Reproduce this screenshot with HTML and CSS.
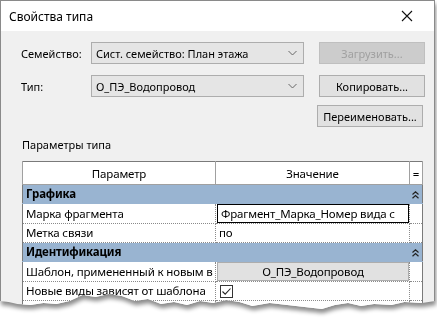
FILE: index.html
```html
<!DOCTYPE html>
<html lang="ru">

<head>
    <meta charset="UTF-8">
    <title>Свойства типа</title>
    <link rel="stylesheet" href="styles.css">
</head>

<body>
    <div class="shadow">
        <div class="window">
            <div class="titlebar">
                <span class="title">Свойства типа</span>
                <svg class="close" width="12" height="12" viewBox="0 0 12 12">
                    <path d="M1 1L11 11M11 1L1 11" stroke="#111" stroke-width="1.1" fill="none" />
                </svg>
            </div>

            <div class="content">
                <div class="row">
                    <label class="label">Семейство:</label>
                    <div class="select">
                        <span>Сист. семейство: План этажа</span>
                        <svg width="9" height="6" viewBox="0 0 9 6"><path d="M0.5 1L4.5 5L8.5 1" stroke="#666" fill="none" /></svg>
                    </div>
                    <button class="btn disabled">Загрузить...</button>
                </div>
                <div class="row">
                    <label class="label">Тип:</label>
                    <div class="select">
                        <span>О_ПЭ_Водопровод</span>
                        <svg width="9" height="6" viewBox="0 0 9 6"><path d="M0.5 1L4.5 5L8.5 1" stroke="#666" fill="none" /></svg>
                    </div>
                    <button class="btn">Копировать...</button>
                </div>
                <div class="row row-right">
                    <button class="btn">Переименовать...</button>
                </div>

                <div class="section-title">Параметры типа</div>

                <table class="params">
                    <thead>
                        <tr>
                            <th class="col-name">Параметр</th>
                            <th class="col-value">Значение</th>
                            <th class="col-eq">=</th>
                        </tr>
                    </thead>
                    <tbody>
                        <tr class="group">
                            <td colspan="2">Графика</td>
                            <td class="col-eq"><svg width="7" height="8" viewBox="0 0 7 8"><path d="M0.5 3.5L3.5 0.8L6.5 3.5M0.5 7.3L3.5 4.6L6.5 7.3" stroke="#222" stroke-width="1.2" fill="none" /></svg></td>
                        </tr>
                        <tr>
                            <td>Марка фрагмента</td>
                            <td class="editing"><div class="input">Фрагмент_Марка_Номер вида с</div></td>
                            <td></td>
                        </tr>
                        <tr>
                            <td>Метка связи</td>
                            <td>по</td>
                            <td></td>
                        </tr>
                        <tr class="group">
                            <td colspan="2">Идентификация</td>
                            <td class="col-eq"><svg width="7" height="8" viewBox="0 0 7 8"><path d="M0.5 3.5L3.5 0.8L6.5 3.5M0.5 7.3L3.5 4.6L6.5 7.3" stroke="#222" stroke-width="1.2" fill="none" /></svg></td>
                        </tr>
                        <tr>
                            <td>Шаблон, примененный к новым в</td>
                            <td class="editing"><div class="cell-btn">О_ПЭ_Водопровод</div></td>
                            <td></td>
                        </tr>
                        <tr>
                            <td>Новые виды зависят от шаблона</td>
                            <td>
                                <span class="check">
                                    <svg width="11" height="11" viewBox="0 0 11 11"><path d="M1.5 5.5L4.2 8.2L9.5 2.5" stroke="#222" stroke-width="1.1" fill="none" /></svg>
                                </span>
                            </td>
                            <td></td>
                        </tr>
                        <tr>
                            <td>&nbsp;</td>
                            <td></td>
                            <td></td>
                        </tr>
                    </tbody>
                </table>
            </div>
        </div>
    </div>
</body>

</html>
```

FILE: styles.css
```css
body {
    margin: 0;
    padding: 0;
    background-color: #ffffff;
    font-family: "Noto Sans", "Open Sans", sans-serif;
    color: #000000;
}

/* Рваный край снизу */
.shadow {
    filter: drop-shadow(1px 4px 2px rgba(0, 0, 0, 0.45));
    width: 435px;
}

.window {
    width: 433px;
    height: 318px;
    border: 1px solid #8a8a8a;
    border-bottom: none;
    background-color: #f0f0f0;
    overflow: hidden;
    clip-path: polygon(0 0, 100% 0, 100% 301px,
        97% 303px, 93% 302px, 90% 305px, 86% 304px, 83% 306px, 80% 303px,
        77% 305px, 74% 309px, 70% 307px, 66% 305px, 62% 303px, 58% 306px,
        55% 302px, 52% 300px, 49% 303px, 46% 301px, 43% 305px, 40% 302px,
        37% 304px, 34% 299px, 31% 301px, 28% 296px, 25% 294px, 22% 297px,
        19% 295px, 16% 301px, 13% 304px, 10% 303px, 7% 305px, 4% 304px,
        2% 302px, 0 301px);
}

.titlebar {
    height: 30px;
    background-color: #ffffff;
    display: flex;
    align-items: center;
    justify-content: space-between;
    padding: 0 21px 0 8px;
}

.title {
    font-size: 12px;
}

.content {
    padding: 11px 0 0 20px;
    font-size: 11px;
}

.row {
    display: flex;
    align-items: center;
    height: 22px;
    margin-bottom: 11px;
}

.row-right {
    justify-content: flex-end;
    padding-right: 11px;
    margin-top: -3px;
}

.label {
    width: 70px;
}

.select {
    height: 20px;
    border: 1px solid #adadad;
    background-color: #e5e5e5;
    display: flex;
    align-items: center;
    justify-content: space-between;
    padding: 0 6px 0 4px;
    box-sizing: content-box;
    width: 201px;
}

.btn {
    margin-left: 15px;
    width: 106px;
    height: 22px;
    border: 1px solid #adadad;
    background-color: #e1e1e1;
    font-family: inherit;
    font-size: 11px;
    padding: 0;
}

.row-right .btn {
    margin-left: 0;
}

.btn.disabled {
    background-color: #cccccc;
    border-color: #bfbfbf;
    color: #a0a0a0;
}

.section-title {
    margin-top: -1px;
    margin-left: 1px;
    height: 24px;
}

.params {
    border-collapse: collapse;
    border: 1px solid #7a7a7a;
    margin-left: 1px;
    width: 399px;
    table-layout: fixed;
    background-color: #ffffff;
    font-size: 11.5px;
    letter-spacing: -0.15px;
}

.params th {
    font-weight: normal;
    height: 22px;
    border: 1px solid #a0a0a0;
    border-top: none;
    padding: 0;
}

.col-name {
    width: 192px;
}

.col-value {
    width: 193px;
}

.col-eq {
    width: 12px;
    text-align: center;
}

.params td {
    height: 18px;
    padding: 0 0 0 3px;
    border-bottom: 1px dotted #8a8a8a;
    border-right: 1px dotted #8a8a8a;
    white-space: nowrap;
    overflow: hidden;
    line-height: 18px;
}

.params .group td {
    background-color: #99b4d1;
    font-weight: bold;
    border-right: none;
    border-bottom: 1px solid #99b4d1;
}

.params .group td.col-eq {
    padding: 0;
}

.params .group svg {
    vertical-align: middle;
}

.params td.editing {
    padding: 0 0 0 1px;
}

.input {
    height: 17px;
    border: 1px solid #000000;
    background-color: #ffffff;
    padding-left: 3px;
    line-height: 17px;
}

.cell-btn {
    height: 17px;
    border: 1px solid #adadad;
    background-color: #e1e1e1;
    text-align: center;
    line-height: 17px;
}

.check {
    display: inline-flex;
    width: 11px;
    height: 11px;
    border: 1px solid #333333;
    vertical-align: middle;
    margin-left: 1px;
}

.check svg {
    display: block;
}
```
